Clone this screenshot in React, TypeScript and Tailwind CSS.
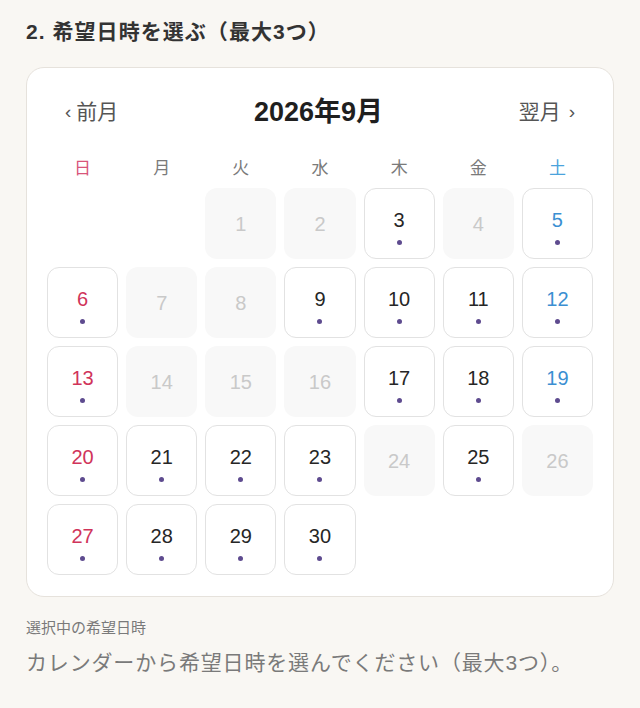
import React from 'react';

type Day = { n: number; enabled: boolean };

const weekdays = ['日', '月', '火', '水', '木', '金', '土'];

// September 2026 starts on Tuesday; these days are not selectable
const disabled = [1, 2, 4, 7, 8, 14, 15, 16, 24, 26];

const days: (Day | null)[] = [
    null,
    null,
    ...Array.from({ length: 30 }, (_, i) => ({ n: i + 1, enabled: !disabled.includes(i + 1) })),
];

function textColor(col: number, enabled: boolean) {
    if (!enabled) return 'text-[#c9c9c9]';
    if (col === 0) return 'text-[#d0345a]';
    if (col === 6) return 'text-[#3b8fd2]';
    return 'text-[#262626]';
}

export default function App() {
    return (
        <div
            className="min-h-[708px] w-full bg-[#f9f7f3] px-[26px] pt-[18px]"
            style={{ fontFamily: '"Liberation Sans", "Noto Sans CJK JP", sans-serif' }}
        >
            <h2 className="text-[21px] font-bold leading-[28px] tracking-[0.05em] text-[#333]">
                2. 希望日時を選ぶ（最大3つ）
            </h2>

            <div className="mt-[21px] rounded-[18px] border border-[#e6e2dc] bg-white px-[20px] pt-[20px] pb-[21px]">
                {/* Month navigation */}
                <div className="flex h-[48px] items-center justify-between px-[18px] text-[#555]">
                    <button type="button" className="flex items-center gap-[5px] text-[21px]">
                        <span className="text-[19px]">‹</span>
                        <span>前月</span>
                    </button>
                    <div className="text-[27px] font-bold text-[#1f1f1f]">2026年9月</div>
                    <button type="button" className="flex items-center gap-[8px] text-[21px]">
                        <span>翌月</span>
                        <span className="text-[19px]">›</span>
                    </button>
                </div>

                {/* Weekday labels */}
                <div className="mt-[20px] grid h-[26px] grid-cols-7 gap-[8px]">
                    {weekdays.map((w, i) => (
                        <div
                            key={w}
                            className={`flex items-center justify-center text-[17px] ${
                                i === 0 ? 'text-[#d8557a]' : i === 6 ? 'text-[#4aa3dc]' : 'text-[#7a7a7a]'
                            }`}
                        >
                            {w}
                        </div>
                    ))}
                </div>

                {/* Days */}
                <div className="mt-[6px] grid grid-cols-7 gap-[8px]">
                    {days.map((d, i) =>
                        d === null ? (
                            <div key={`e${i}`} className="h-[71px]" />
                        ) : d.enabled ? (
                            <button
                                key={d.n}
                                type="button"
                                className="flex h-[71px] flex-col items-center justify-center rounded-[12px] border-[1.5px] border-[#e2e2e2] bg-white pt-[5px]"
                            >
                                <span className={`text-[20px] leading-[24px] ${textColor(i % 7, true)}`}>{d.n}</span>
                                <span className="mt-[8px] h-[5px] w-[5px] rounded-full bg-[#5e4b8f]" />
                            </button>
                        ) : (
                            <div
                                key={d.n}
                                className="flex h-[71px] items-center justify-center rounded-[12px] bg-[#f8f8f8]"
                            >
                                <span className={`text-[20px] leading-[24px] ${textColor(i % 7, false)}`}>{d.n}</span>
                            </div>
                        )
                    )}
                </div>
            </div>

            <div className="mt-[20px] text-[15px] leading-[22px] text-[#7a7a7a]">選択中の希望日時</div>
            <div className="mt-[9px] text-[21px] leading-[30px] tracking-[0.04em] text-[#7a7a7a]">
                カレンダーから希望日時を選んでください（最大3つ）。
            </div>
        </div>
    );
}
